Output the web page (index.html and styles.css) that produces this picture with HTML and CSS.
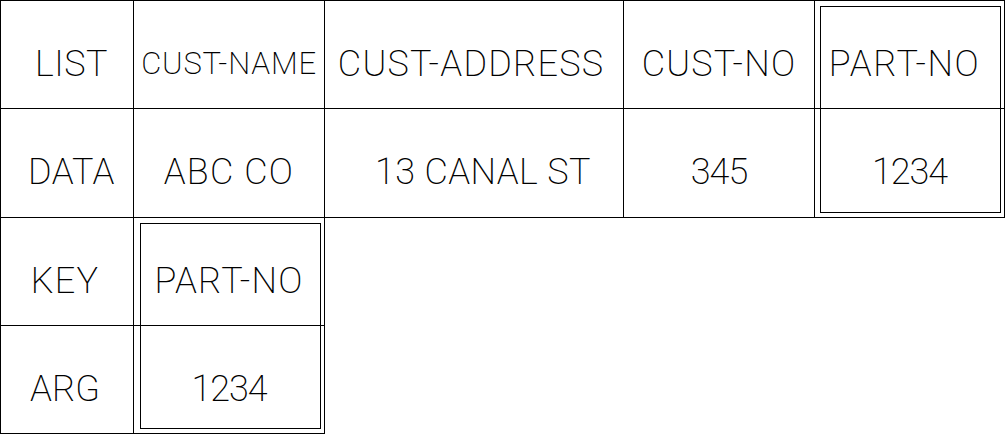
FILE: index.html
```html
<!DOCTYPE html>
<html>
<head>
<meta charset="utf-8">
<link rel="stylesheet" href="styles.css">
</head>
<body>
<div class="sheet">
  <div class="cell c1 r1 nudge-list">LIST</div>
  <div class="cell c2 r1 small">CUST-NAME</div>
  <div class="cell c3 r1 nudge-head">CUST-ADDRESS</div>
  <div class="cell c4 r1">CUST-NO</div>
  <div class="cell c5 r1 nudge-left">PART-NO</div>

  <div class="cell c1 r2 nudge-list tight">DATA</div>
  <div class="cell c2 r2">ABC CO</div>
  <div class="cell c3 r2 nudge-addr">13 CANAL ST</div>
  <div class="cell c4 r2 digits">345</div>
  <div class="cell c5 r2 digits">1234</div>

  <div class="cell c1 r3 nudge-key">KEY</div>
  <div class="cell c2 r3">PART-NO</div>

  <div class="cell c1 r4 nudge-key tight">ARG</div>
  <div class="cell c2 r4 digits">1234</div>

  <div class="frame frame-top"></div>
  <div class="frame frame-bottom"></div>
</div>
</body>
</html>
```

FILE: styles.css
```css
html, body {
  margin: 0;
  padding: 0;
  background: #ffffff;
}

.sheet {
  display: grid;
  grid-template-columns: 133px 191px 299px 191px 190px;
  grid-template-rows: 108px 109px 108px 108px;
  border-left: 1px solid #000;
  border-top: 1px solid #000;
  width: 1004px;
  height: 433px;
  font-family: Roboto, "Liberation Sans", sans-serif;
  font-weight: 200;
  font-size: 36px;
  color: #000;
}

.cell {
  border-right: 1px solid #000;
  border-bottom: 1px solid #000;
  display: flex;
  align-items: center;
  justify-content: center;
  padding-top: 18px;
  box-sizing: border-box;
  white-space: nowrap;
  letter-spacing: 1.2px;
}

.small {
  font-size: 31px;
  letter-spacing: 0.8px;
}

.tight { letter-spacing: 0; }
.digits { letter-spacing: -1px; }

.c1 { grid-column: 1; }
.c2 { grid-column: 2; }
.c3 { grid-column: 3; }
.c4 { grid-column: 4; }
.c5 { grid-column: 5; }
.r1 { grid-row: 1; }
.r2 { grid-row: 2; }
.r3 { grid-row: 3; }
.r4 { grid-row: 4; }

.nudge-list { padding-left: 9px; letter-spacing: 0.5px; }
.nudge-key { padding-left: 0; padding-right: 4px; }
.nudge-head { padding-right: 6px; }
.nudge-addr { padding-left: 18px; word-spacing: 0; letter-spacing: 0.4px; }
.nudge-left { padding-right: 10px; letter-spacing: 1.5px; }

.frame {
  border: 1px solid #000;
  pointer-events: none;
}

.frame-top {
  grid-column: 5;
  grid-row: 1 / 3;
  margin: 5px 4px 5px 5px;
}

.frame-bottom {
  grid-column: 2;
  grid-row: 3 / 5;
  margin: 5px 4px 5px 6px;
}
```
